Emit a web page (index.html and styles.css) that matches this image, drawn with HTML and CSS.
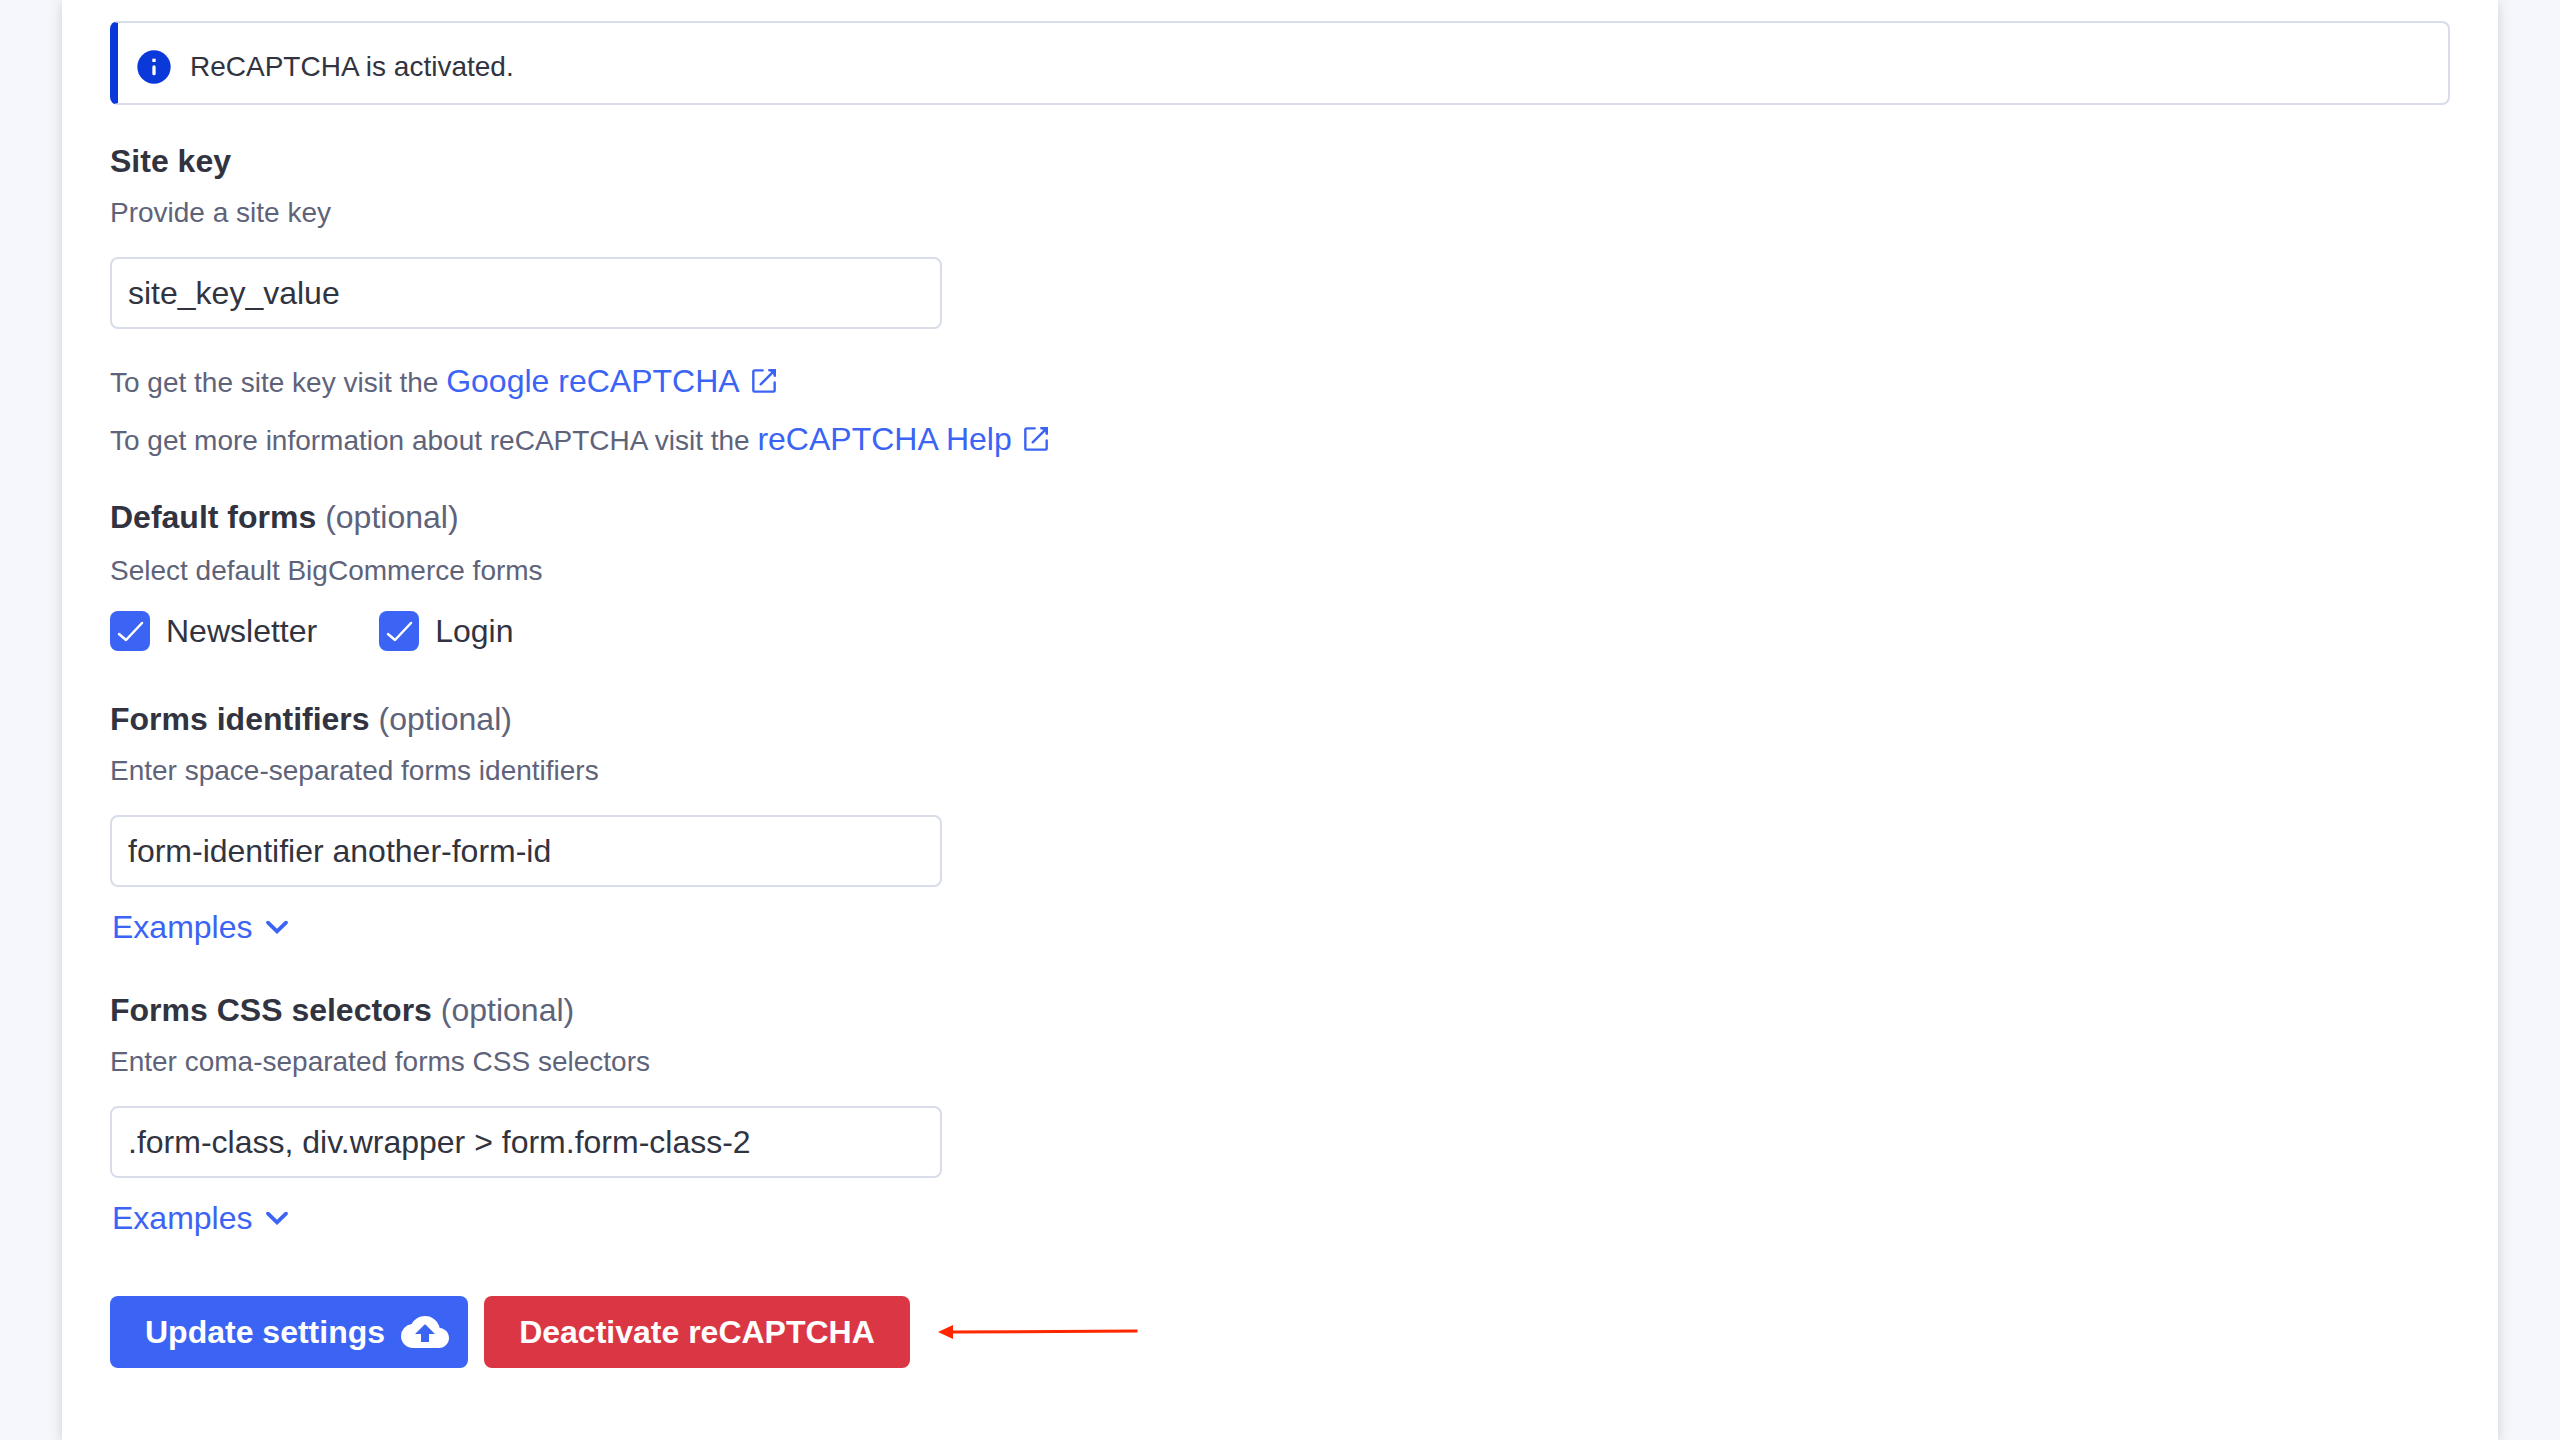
FILE: index.html
```html
<!DOCTYPE html>
<html lang="en">
<head>
<meta charset="utf-8">
<title>ReCAPTCHA settings</title>
<link rel="stylesheet" href="styles.css">
</head>
<body>
<svg class="sprite" aria-hidden="true">
  <symbol id="open" viewBox="0 0 24 24"><g fill="none" stroke="currentColor" stroke-width="1.8" stroke-linecap="round" stroke-linejoin="round"><path d="M11 4H5a1 1 0 0 0-1 1v14a1 1 0 0 0 1 1h14a1 1 0 0 0 1-1v-6M16 4h4v4M20 4 9.500 14.500"/></g><path d="M15 3h6v6z" fill="currentColor"/></symbol>
  <symbol id="chevron" viewBox="0 0 24 24"><path d="m6.6 9.4 5.4 5.2 5.4-5.2" fill="none" stroke="currentColor" stroke-width="2.3" stroke-linecap="round"/></symbol>
</svg>
<main class="panel">
  <div class="alert" role="status">
    <svg class="alert-icon" viewBox="0 0 24 24" aria-hidden="true"><circle cx="12" cy="12" r="10" fill="currentColor"/><path d="M12 12v4" stroke="#fff" stroke-width="2" stroke-linecap="round"/><path d="M11 7h2v2h-2z" fill="#fff"/></svg>
    <span>ReCAPTCHA is activated.</span>
  </div>
  <form class="form">
    <div class="field">
      <label class="label" for="site-key">Site key</label>
      <p class="hint">Provide a site key</p>
      <input class="input" id="site-key" type="text" value="site_key_value">
      <div class="notes">
        <p class="note">To get the site key visit the <a class="link" href="#google">Google reCAPTCHA<svg class="link-icon" aria-hidden="true"><use href="#open"/></svg></a></p>
        <p class="note">To get more information about reCAPTCHA visit the <a class="link" href="#help">reCAPTCHA Help<svg class="link-icon" aria-hidden="true"><use href="#open"/></svg></a></p>
      </div>
    </div>
    <div class="field field-checks" role="group" aria-labelledby="defaults">
      <div class="label" id="defaults">Default forms <span class="optional">(optional)</span></div>
      <p class="hint">Select default BigCommerce forms</p>
      <div class="checks">
        <label class="check"><input class="box" type="checkbox" checked>Newsletter</label>
        <label class="check"><input class="box" type="checkbox" checked>Login</label>
      </div>
    </div>
    <div class="field">
      <label class="label" for="identifiers">Forms identifiers <span class="optional">(optional)</span></label>
      <p class="hint">Enter space-separated forms identifiers</p>
      <input class="input" id="identifiers" type="text" value="form-identifier another-form-id">
      <button class="examples" type="button">Examples<svg class="chevron" aria-hidden="true"><use href="#chevron"/></svg></button>
    </div>
    <div class="field">
      <label class="label" for="selectors">Forms CSS selectors <span class="optional">(optional)</span></label>
      <p class="hint">Enter coma-separated forms CSS selectors</p>
      <input class="input" id="selectors" type="text" value=".form-class, div.wrapper &gt; form.form-class-2">
      <button class="examples" type="button">Examples<svg class="chevron" aria-hidden="true"><use href="#chevron"/></svg></button>
    </div>
    <div class="actions">
      <button class="button button-primary" type="submit">Update settings<svg class="cloud" viewBox="0 0 24 24" aria-hidden="true"><path fill="currentColor" d="M19.35 10.04A7.49 7.49 0 0 0 12 4C9.11 4 6.6 5.64 5.35 8.04A5.994 5.994 0 0 0 0 14c0 3.31 2.69 6 6 6h13c2.76 0 5-2.24 5-5 0-2.64-2.05-4.78-4.65-4.96zM14 13v4h-4v-4H7l4.65-4.65c.2-.2.51-.2.71 0L17 13h-3z"/></svg></button>
      <button class="button button-danger" type="button">Deactivate reCAPTCHA</button>
      <svg class="pointer" viewBox="0 0 200 16" aria-hidden="true"><path d="M14 8 199.500 7" stroke="#ff2600" stroke-width="3"/><path d="M0 8 15 1v14z" fill="#ff2600"/></svg>
    </div>
  </form>
</main>
</body>
</html>
```
FILE: styles.css
```css
* {
  box-sizing: border-box;
}

body {
  margin: 0;
  padding: 0 62px;
  background: #f6f7fc;
  color: #313440;
  font: 32px/48px "Liberation Sans", Arial, sans-serif;
}

p {
  margin: 0;
}

.sprite {
  display: none;
}

.panel {
  min-height: 100vh;
  padding: 21px 48px 70px;
  background: #fff;
  box-shadow: 0 2px 12px rgba(49, 52, 64, 0.2);
}

.alert {
  display: flex;
  align-items: center;
  gap: 16px;
  margin-bottom: 32px;
  padding: 24px 16px 16px;
  border: 2px solid #d9dce9;
  border-left: 8px solid #0b38d9;
  border-radius: 8px;
  font-size: 28px;
  line-height: 40px;
}

.alert-icon {
  width: 40px;
  height: 40px;
  color: #0b38d9;
}

.form {
  display: flex;
  flex-direction: column;
}

.field {
  display: flex;
  flex-direction: column;
  align-items: flex-start;
  margin-bottom: 35px;
}

.field:first-child {
  margin-bottom: 24px;
}

.field-checks {
  margin-bottom: 44px;
}

.label {
  margin-bottom: 8px;
  font-weight: 700;
}

.optional {
  color: #5e637a;
  font-weight: 400;
}

.hint {
  color: #5e637a;
  font-size: 28px;
  line-height: 40px;
}

.field-checks .label {
  margin-bottom: 10px;
}

.input {
  width: 100%;
  max-width: 832px;
  height: 72px;
  margin-top: 24px;
  padding: 0 16px;
  border: 2px solid #d9dce9;
  border-radius: 8px;
  background: #fff;
  color: #313440;
  font: inherit;
}

.notes {
  margin-top: 24px;
}

.note {
  color: #5e637a;
  font-size: 28px;
  line-height: 56px;
}

.link {
  color: #3c64f4;
  font-size: 32px;
  text-decoration: none;
}

.link-icon {
  width: 32px;
  height: 32px;
  margin-left: 8px;
  vertical-align: -5px;
}

.checks {
  display: flex;
  gap: 62px;
  margin-top: 20px;
}

.check {
  display: flex;
  align-items: center;
  gap: 16px;
  line-height: 40px;
}

.box {
  width: 40px;
  height: 40px;
  margin: 0;
  appearance: none;
  border-radius: 8px;
  background: #3c64f4 url("data:image/svg+xml,%3Csvg xmlns='http://www.w3.org/2000/svg' viewBox='0 0 40 40'%3E%3Cpath d='m9 23 7 6L32 12' fill='none' stroke='white' stroke-width='2.5' stroke-linecap='round' stroke-linejoin='round'/%3E%3C/svg%3E");
}

.examples {
  display: flex;
  align-items: center;
  gap: 4px;
  margin-top: 16px;
  padding: 0 2px;
  border: 0;
  background: none;
  color: #3c64f4;
  font: inherit;
}

.chevron {
  width: 40px;
  height: 40px;
}

.actions {
  display: flex;
  align-items: center;
  gap: 16px;
  padding-top: 19px;
}

.button {
  display: flex;
  align-items: center;
  justify-content: center;
  gap: 16px;
  height: 72px;
  padding: 0 32px;
  border: 0;
  border-radius: 8px;
  color: #fff;
  font: inherit;
  font-weight: 700;
}

.button-primary {
  min-width: 358px;
  padding-right: 16px;
  background: #3c64f4;
}

.button-danger {
  min-width: 426px;
  background: #db3643;
}

.cloud {
  width: 48px;
  height: 48px;
}

.pointer {
  width: 200px;
  height: 16px;
  margin-left: 12px;
}
```
